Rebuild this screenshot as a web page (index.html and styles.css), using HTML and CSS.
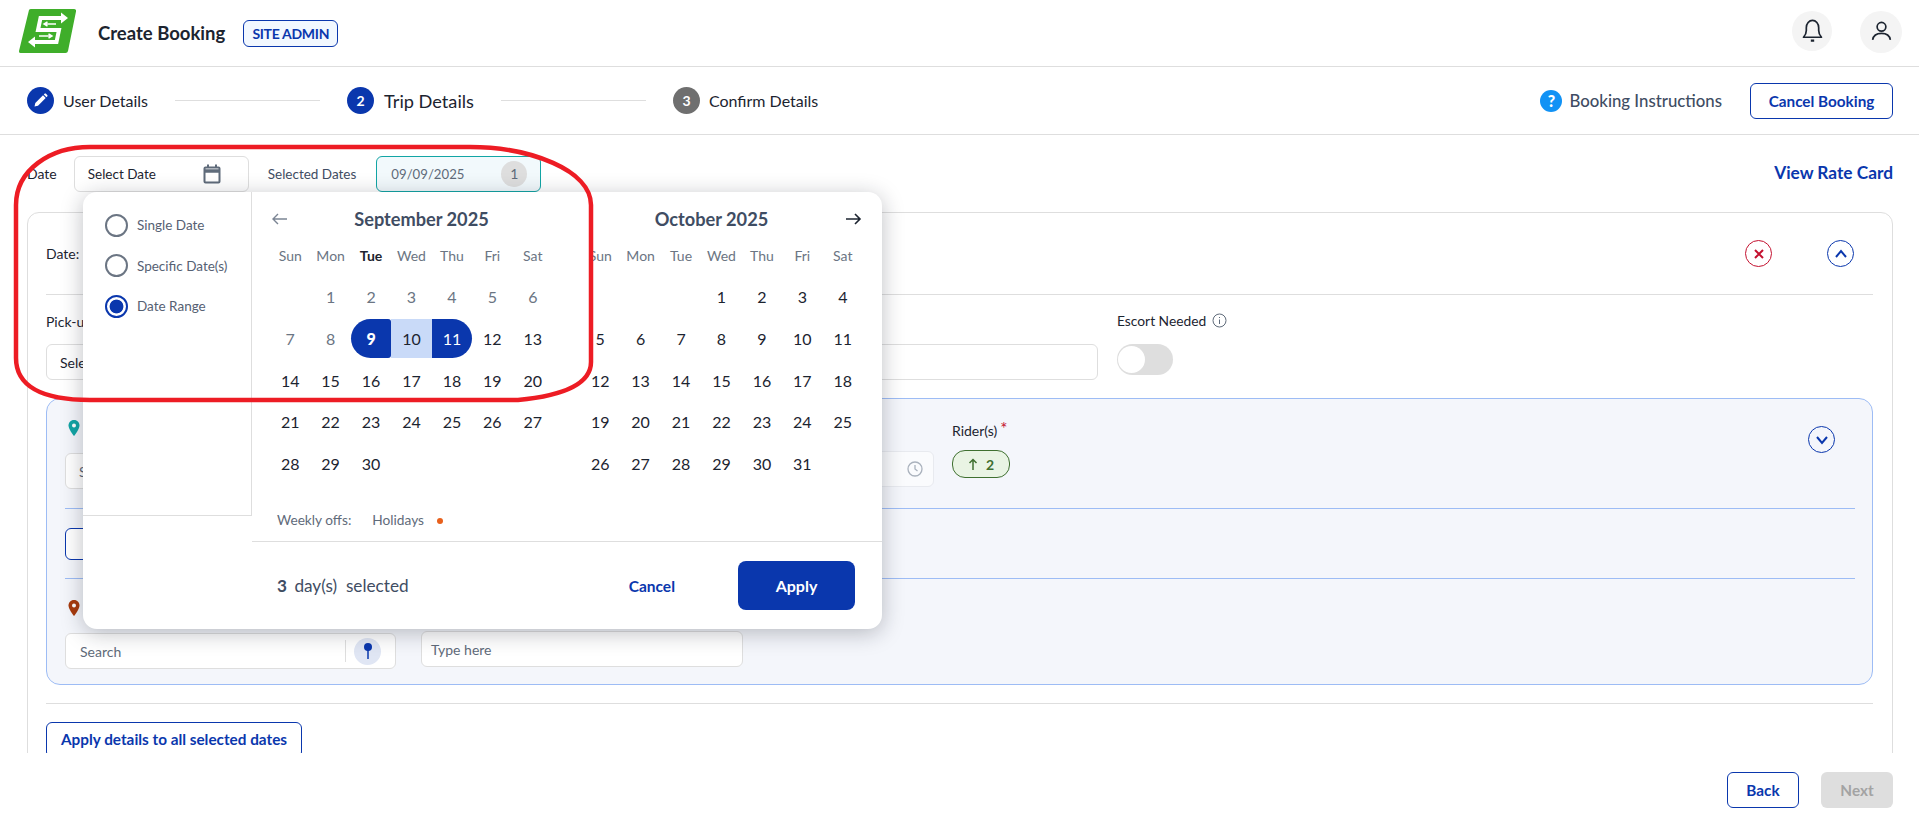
FILE: index.html
```html
<!DOCTYPE html>
<html lang="en">
<head>
<meta charset="utf-8">
<title>Create Booking</title>
<link rel="stylesheet" href="styles.css">
</head>
<body>
<header class="topbar">
  <svg class="logo" width="60" height="46" viewBox="0 0 60 46">
    <path d="M11 2 Q11.500 1 13 1 L56 1 Q58.500 1 58 3.500 L50 43 Q49.600 45 47.500 45 L2.500 45 Q0.500 45 1 43 Z" fill="#3fae2a"/>
    <path d="M44 10 H22.500 L20 22 H41 L38.500 34 H15" fill="none" stroke="#fff" stroke-width="4"/>
    <path d="M43 4.500 L50 10 L43 15.500 Z M17 28.500 L10 34 L17 39.500 Z" fill="#fff"/>
    <path d="M27 16 H38 M29.500 13.800 L26 16 L29.500 18.200 M21 28 H33 M30.500 25.800 L34 28 L30.500 30.200" fill="none" stroke="#fff" stroke-width="1.500"/>
  </svg>
  <h1 class="page-title">Create Booking</h1>
  <span class="role-badge">SITE ADMIN</span>
  <div class="top-actions">
    <span class="round-btn bell">
      <svg width="27" height="27" viewBox="0 0 24 24" fill="none" stroke="#1c2430" stroke-width="1.500"><path d="M4 18 Q6.500 15.500 6.500 12 V9.500 A5.500 6.500 0 0 1 17.500 9.500 V12 Q17.500 15.500 20 18 Z" stroke-linejoin="round"/><path d="M10.500 21 H13.500" stroke-width="2"/></svg>
    </span>
    <span class="round-btn user">
      <svg width="25" height="25" viewBox="0 0 24 24" fill="none" stroke="#1c2430" stroke-width="1.600"><circle cx="12" cy="7.500" r="4.200"/><path d="M3.500 20 Q4.500 13.800 12 13.800 Q19.500 13.800 20.500 20"/></svg>
    </span>
  </div>
</header>

<nav class="stepper">
  <div class="step">
    <span class="step-dot done">
      <svg width="17" height="17" viewBox="0 0 17 17"><path d="M2.500 14.500 L3.300 11 L11 3.300 L13.700 6 L6 13.700 Z M11.800 2.500 L12.800 1.600 Q13.300 1.200 13.800 1.600 L15.400 3.200 Q15.800 3.700 15.400 4.200 L14.500 5.200 Z" fill="#fff"/></svg>
    </span>
    <span class="step-label">User Details</span>
  </div>
  <span class="step-line line-one"></span>
  <div class="step">
    <span class="step-dot active">2</span>
    <span class="step-label current">Trip Details</span>
  </div>
  <span class="step-line line-two"></span>
  <div class="step">
    <span class="step-dot todo">3</span>
    <span class="step-label">Confirm Details</span>
  </div>
  <div class="step-actions">
    <span class="help-dot">?</span>
    <span class="help-text">Booking Instructions</span>
    <button class="btn btn-outline cancel-booking">Cancel Booking</button>
  </div>
</nav>

<main class="content">
  <div class="toolbar">
    <span class="tool-label date-label">Date</span>
    <div class="date-select">
      <span>Select Date</span>
      <svg width="18" height="20" viewBox="0 0 18 20" fill="none" stroke="#5f6b7a" stroke-width="2"><rect x="1.500" y="3.500" width="15" height="15" rx="1"/><path d="M1.500 7 H16.500" stroke-width="3.500"/><path d="M5 0.500 V3 M13 0.500 V3"/></svg>
    </div>
    <span class="tool-label selected-label">Selected Dates</span>
    <div class="date-selected">
      <span>09/09/2025</span>
      <span class="count">1</span>
    </div>
    <a class="rate-link">View Rate Card</a>
  </div>

  <section class="card">
    <div class="card-head">
      <span class="field-label">Date:</span>
      <div class="card-tools">
        <span class="circle red"><svg width="12" height="12" viewBox="0 0 12 12" fill="none" stroke="#c4112f" stroke-width="2"><path d="M2 2 L10 10 M10 2 L2 10"/></svg></span>
        <span class="circle blue"><svg width="14" height="14" viewBox="0 0 14 14" fill="none" stroke="#0a37ad" stroke-width="2"><path d="M2 10 L7 4 L12 10"/></svg></span>
      </div>
    </div>
    <div class="trip-row">
      <div class="field field-pickup">
        <span class="field-label">Pick-up</span>
        <div class="input">Select</div>
      </div>
      <div class="field field-wide">
        <span class="field-label">&nbsp;</span>
        <div class="input"></div>
      </div>
      <div class="field field-escort">
        <span class="field-label escort-label">Escort Needed
          <svg width="15" height="15" viewBox="0 0 15 15" fill="none" stroke="#5f6b7a"><circle cx="7.500" cy="7.500" r="6.500"/><path d="M7.500 6.500 V11 M7.500 4 V5"/></svg>
        </span>
        <span class="toggle"><span class="knob"></span></span>
      </div>
    </div>

    <div class="panel">
      <div class="panel-row pickup-row">
        <div class="stop-col">
          <span class="pin-line">
            <svg width="12" height="16" viewBox="0 0 12 16"><path d="M6 0 C2.500 0 0.500 2.500 0.500 5.500 C0.500 9.500 6 16 6 16 C6 16 11.500 9.500 11.500 5.500 C11.500 2.500 9.500 0 6 0 Z" fill="#12a5a5"/><circle cx="6" cy="5.500" r="2" fill="#fff"/></svg>
          </span>
          <div class="input small">Search</div>
        </div>
        <div class="time-col">
          <div class="input time-input">
            <svg width="16" height="16" viewBox="0 0 16 16" fill="none" stroke="#aab2bd" stroke-width="1.300"><circle cx="8" cy="8" r="7"/><path d="M8 4 V8 L10.500 10"/></svg>
          </div>
        </div>
        <div class="rider-col">
          <span class="field-label rider-label">Rider(s)<span class="star">*</span></span>
          <span class="rider-chip">
            <svg width="10" height="12" viewBox="0 0 10 12" fill="none" stroke="#3f7030" stroke-width="1.500"><path d="M5 12 V1.500 M1.500 5 L5 1.500 L8.500 5"/></svg>
            2
          </span>
        </div>
        <span class="circle blue expand"><svg width="14" height="14" viewBox="0 0 14 14" fill="none" stroke="#0a37ad" stroke-width="2"><path d="M2 4 L7 10 L12 4"/></svg></span>
      </div>
      <div class="panel-row stop-row">
        <button class="btn btn-outline add-stop">Add</button>
      </div>
      <div class="panel-row drop-row">
        <div class="stop-col">
          <span class="pin-line">
            <svg width="12" height="16" viewBox="0 0 12 16"><path d="M6 0 C2.500 0 0.500 2.500 0.500 5.500 C0.500 9.500 6 16 6 16 C6 16 11.500 9.500 11.500 5.500 C11.500 2.500 9.500 0 6 0 Z" fill="#a83a0c"/><circle cx="6" cy="5.500" r="2" fill="#fff"/></svg>
          </span>
          <div class="input small search-input">
            <span>Search</span>
            <span class="search-divider"></span>
            <span class="pin-btn"><svg width="10" height="18" viewBox="0 0 10 18"><circle cx="5" cy="5" r="4" fill="#0a37ad"/><path d="M5 8 V17" stroke="#0a37ad" stroke-width="1.500"/></svg></span>
          </div>
        </div>
        <div class="input small type-input">Type here</div>
      </div>
    </div>

    <div class="apply-row">
      <button class="btn btn-outline apply-all">Apply details to all selected dates</button>
    </div>
  </section>
</main>

<footer class="page-foot">
  <button class="btn btn-outline foot-btn">Back</button>
  <button class="btn btn-disabled foot-btn">Next</button>
</footer>

<div class="picker">
  <aside class="picker-modes">
    <label class="mode"><span class="radio"></span>Single Date</label>
    <label class="mode"><span class="radio"></span>Specific Date(s)</label>
    <label class="mode"><span class="radio on"></span>Date Range</label>
  </aside>
  <div class="picker-main">
    <div class="months">
      <div class="month">
        <div class="month-head">
          <svg class="nav-arrow" width="20" height="20" viewBox="0 0 20 20" fill="none" stroke="#7b8594" stroke-width="1.400"><path d="M17 10 H3 M8 5 L3 10 L8 15"/></svg>
          <h2 class="month-title">September 2025</h2>
        </div>
        <div class="weekdays">
          <span>Sun</span><span>Mon</span><span class="today-col">Tue</span><span>Wed</span><span>Thu</span><span>Fri</span><span>Sat</span>
        </div>
        <div class="days">
          <span></span><span class="past">1</span><span class="past">2</span><span class="past">3</span><span class="past">4</span><span class="past">5</span><span class="past">6</span>
          <span class="past">7</span><span class="past">8</span><span class="range-wrap"><b class="range start">9</b></span><span class="range-wrap"><b class="range mid">10</b></span><span class="range-wrap"><b class="range end">11</b></span><span>12</span><span>13</span>
          <span>14</span><span>15</span><span>16</span><span>17</span><span>18</span><span>19</span><span>20</span>
          <span>21</span><span>22</span><span>23</span><span>24</span><span>25</span><span>26</span><span>27</span>
          <span>28</span><span>29</span><span>30</span>
        </div>
      </div>
      <div class="month">
        <div class="month-head">
          <h2 class="month-title">October 2025</h2>
          <svg class="nav-arrow" width="20" height="20" viewBox="0 0 20 20" fill="none" stroke="#1c2430" stroke-width="1.600"><path d="M3 10 H17 M12 5 L17 10 L12 15"/></svg>
        </div>
        <div class="weekdays">
          <span>Sun</span><span>Mon</span><span>Tue</span><span>Wed</span><span>Thu</span><span>Fri</span><span>Sat</span>
        </div>
        <div class="days">
          <span></span><span></span><span></span><span>1</span><span>2</span><span>3</span><span>4</span>
          <span>5</span><span>6</span><span>7</span><span>8</span><span>9</span><span>10</span><span>11</span>
          <span>12</span><span>13</span><span>14</span><span>15</span><span>16</span><span>17</span><span>18</span>
          <span>19</span><span>20</span><span>21</span><span>22</span><span>23</span><span>24</span><span>25</span>
          <span>26</span><span>27</span><span>28</span><span>29</span><span>30</span><span>31</span>
        </div>
      </div>
    </div>
    <div class="legend">
      <span>Weekly offs:</span>
      <span class="legend-holiday">Holidays</span>
      <span class="legend-dot"></span>
    </div>
    <div class="picker-foot">
      <span class="selected-count"><b>3</b> day(s)&nbsp; selected</span>
      <a class="picker-cancel">Cancel</a>
      <button class="btn btn-primary picker-apply">Apply</button>
    </div>
  </div>
</div>

<svg class="annotation" width="1919" height="824" viewBox="0 0 1919 824" fill="none">
  <path d="M90 400 L518 400 C560 396 591 385 591 362 L591 205 C591 170 530 147 470 147 L90 147 C50 147 16 170 16 205 L16 358 C16 385 40 400 90 400 Z" stroke="#ed1c24" stroke-width="4.500"/>
</svg>
</body>
</html>
```
FILE: styles.css
```css
* { box-sizing: border-box; }
html, body { margin: 0; height: 824px; overflow: hidden; }
body {
  position: relative;
  font-family: Lato, "Noto Sans", sans-serif;
  color: #1c2430;
  background: #fff;
  font-size: 14px;
}
button { font-family: inherit; cursor: pointer; }
h1, h2 { margin: 0; }

/* top bar */
.topbar {
  height: 67px;
  display: flex;
  align-items: center;
  padding: 0 17px 0 18px;
  border-bottom: 1px solid #dedede;
}
.logo { flex: none; margin-top: -5px; }
.page-title { font-size: 18.500px; font-weight: 700; margin-left: 20px; color: #1c2430; }
.role-badge {
  margin-left: 18px;
  height: 27px;
  width: 95px;
  display: flex;
  align-items: center;
  justify-content: center;
  font-size: 14px;
  font-weight: 700;
  letter-spacing: -.3px;
  color: #0a37ad;
  background: #f2f8ff;
  border: 1px solid #0a37ad;
  border-radius: 6px;
}
.top-actions { margin-left: auto; display: flex; align-items: center; gap: 28px; }
.round-btn {
  display: flex;
  align-items: center;
  justify-content: center;
  border-radius: 50%;
  background: #f4f4f4;
}
.bell { width: 40px; height: 40px; margin-top: -5px; }
.user { width: 42px; height: 42px; margin-top: -3px; }

/* stepper */
.stepper {
  height: 68px;
  display: flex;
  align-items: center;
  padding: 0 26px 0 27px;
  border-bottom: 1px solid #dedede;
}
.step { display: flex; align-items: center; }
.step-dot {
  width: 27px;
  height: 27px;
  border-radius: 50%;
  display: flex;
  align-items: center;
  justify-content: center;
  color: #fff;
  font-size: 14px;
  font-weight: 700;
  flex: none;
}
.step-dot.done, .step-dot.active { background: #0a37ad; }
.step-dot.todo { background: #6f6f6f; }
.step-label { font-size: 16px; margin-left: 9px; color: #1c2430; }
.step-label.current { font-size: 18.200px; margin-left: 10px; }
.step-line { height: 1px; background: #dedede; width: 145px; }
.line-one { margin: 0 27px; }
.line-two { margin: 0 27px; }
.step-actions { margin-left: auto; display: flex; align-items: center; }
.help-dot {
  width: 22px;
  height: 22px;
  border-radius: 50%;
  background: #1192f5;
  color: #fff;
  font-weight: 900;
  font-size: 16px;
  display: flex;
  align-items: center;
  justify-content: center;
}
.help-text { font-size: 16.800px; font-weight: 500; color: #3f4d63; margin-left: 7px; margin-right: 28px; }
.btn { border-radius: 6px; font-weight: 700; font-size: 15.300px; }
.btn-outline { background: #fff; color: #0a37ad; border: 1px solid #0a37ad; }
.btn-primary { background: #0a37ad; color: #fff; border: 0; }
.btn-disabled { background: #dedede; color: #a3a3a3; border: 0; }
.cancel-booking { width: 143px; height: 36px; padding: 0; }

/* content */
.content {
  height: 618px;
  overflow: hidden;
  padding: 21px 26px 0 27px;
}
.toolbar { display: flex; align-items: center; height: 35px; }
.tool-label { font-size: 14px; color: #1c2430; }
.date-select {
  margin-left: 17px;
  width: 175px;
  height: 36px;
  display: flex;
  align-items: center;
  justify-content: space-between;
  padding: 0 27px 0 13px;
  border: 1px solid #dedede;
  border-radius: 6px;
  font-size: 13.500px;
}
.selected-label { margin-left: 19px; color: #3f4d63; font-size: 13.500px; }
.date-selected {
  margin-left: 20px;
  width: 165px;
  height: 36px;
  display: flex;
  align-items: center;
  justify-content: space-between;
  padding: 0 13px 0 14px;
  background: #f2f9fc;
  border: 1px solid #12a5a5;
  border-radius: 6px;
  color: #5f6b7a;
  font-size: 13.200px;
}
.count {
  width: 26px;
  height: 26px;
  border-radius: 50%;
  background: #dedede;
  display: flex;
  align-items: center;
  justify-content: center;
  font-size: 14px;
  color: #5f6b7a;
}
.rate-link { margin-left: auto; margin-top: -2px; font-weight: 700; font-size: 17.300px; color: #0a37ad; }

/* card */
.card {
  margin-top: 21px;
  border: 1px solid #dedede;
  border-radius: 12px 12px 0 0;
  padding: 0 19px 0 18px;
}
.card-head {
  height: 82px;
  display: flex;
  align-items: center;
  justify-content: space-between;
  border-bottom: 1px solid #dedede;
}
.field-label { font-size: 14px; color: #1c2430; }
.card-tools { display: flex; gap: 55px; margin-right: 19px; }
.circle {
  width: 27px;
  height: 27px;
  border-radius: 50%;
  display: flex;
  align-items: center;
  justify-content: center;
  flex: none;
}
.circle.red { border: 1.500px solid #c4112f; }
.circle.blue { border: 1.500px solid #0a37ad; }
.trip-row { height: 103px; display: flex; padding-top: 18px; }
.field { display: flex; flex-direction: column; gap: 14px; }
.field-pickup { width: 330px; }
.field-wide { margin-left: 21px; width: 701px; }
.field-escort { margin-left: 19px; }
.escort-label { display: flex; align-items: center; gap: 6px; height: 17px; font-size: 13.800px; margin-top: -1px; margin-bottom: 1px; }
.input {
  height: 36px;
  background: #fff;
  border: 1px solid #dedede;
  border-radius: 6px;
  display: flex;
  align-items: center;
  padding: 0 13px;
  font-size: 14px;
}
.toggle {
  width: 56px;
  height: 31px;
  border-radius: 16px;
  background: #dedede;
  display: block;
  position: relative;
}
.knob {
  position: absolute;
  left: 1px;
  top: 2px;
  width: 27px;
  height: 27px;
  border-radius: 50%;
  background: #fff;
}

/* blue panel */
.panel {
  height: 287px;
  background: #f4f6fb;
  border: 1px solid #9dbcf5;
  border-radius: 14px;
  padding: 0 17px 0 18px;
}
.panel-row { display: flex; position: relative; }
.pickup-row { height: 110px; border-bottom: 1px solid #9dbcf5; align-items: flex-start; }
.stop-row { height: 70px; border-bottom: 1px solid #9dbcf5; align-items: center; }
.drop-row { height: 106px; }
.stop-col { width: 331px; flex: none; padding-top: 21px; }
.pin-line { display: block; height: 33px; padding-left: 3px; }
.input.small { color: #5f6b7a; font-size: 14px; background: #fff; }
.time-col { width: 538px; padding-top: 52px; flex: none; display: flex; justify-content: flex-end; }
.time-input { width: 200px; justify-content: flex-end; padding-right: 10px; background: #fafbfd; border-color: #e8eaef; }
.rider-col { margin-left: 18px; padding-top: 23px; display: flex; flex-direction: column; gap: 11px; align-items: flex-start; }
.rider-label { display: flex; align-items: flex-start; }
.star { color: #c4112f; font-size: 17px; line-height: 14px; margin-left: 3px; }
.rider-chip {
  width: 58px;
  height: 28px;
  border-radius: 13px;
  border: 1px solid #3f7030;
  background: #e9f4e4;
  color: #3f7030;
  font-size: 14px;
  font-weight: 700;
  display: flex;
  align-items: center;
  justify-content: center;
  gap: 8px;
}
.expand { position: absolute; right: 20px; top: 27px; }
.add-stop { width: 120px; height: 32px; }
.search-input { justify-content: flex-start; padding: 0 8px 0 14px; }
.search-input > span:first-child { width: 265px; }
.search-divider { width: 1px; height: 22px; background: #dedede; }
.pin-btn {
  width: 27px;
  height: 27px;
  margin-left: 8px;
  border-radius: 50%;
  background: #e0e6f4;
  display: flex;
  align-items: center;
  justify-content: center;
}
.type-input { width: 322px; margin-top: 52px; margin-left: 25px; padding-left: 9px; color: #6f7782; }
.apply-row { margin-top: 18px; padding-top: 18px; border-top: 1px solid #dedede; }
.apply-all { width: 256px; height: 36px; padding: 0 0 3px; }

/* bottom bar */
.page-foot {
  height: 71px;
  display: flex;
  justify-content: flex-end;
  align-items: flex-start;
  gap: 22px;
  padding: 19px 26px 0 0;
}
.foot-btn { width: 72px; height: 36px; padding: 0; }

/* date picker popover */
.picker {
  position: absolute;
  left: 83px;
  top: 192px;
  width: 799px;
  height: 437px;
  display: flex;
  background: #fff;
  border-radius: 14px;
  box-shadow: 0 4px 22px rgba(20, 25, 40, .28);
}
.picker-modes {
  width: 169px;
  height: 324px;
  flex: none;
  padding: 22px 0 0 22px;
  border-right: 1px solid #dedede;
  border-bottom: 1px solid #dedede;
  display: flex;
  flex-direction: column;
  gap: 18.500px;
}
.mode { display: flex; align-items: center; gap: 9px; height: 22px; font-size: 13.500px; color: #566173; }
.radio { width: 23px; height: 23px; border-radius: 50%; border: 2px solid #6b7583; flex: none; }
.radio.on {
  border-color: #0a37ad;
  background: radial-gradient(circle, #0a37ad 0 6.500px, #fff 7.300px);
}
.picker-main { flex: 1; min-width: 0; display: flex; flex-direction: column; }
.months { display: flex; gap: 27px; padding: 0 19px 0 18px; height: 294px; }
.month { width: 283px; flex: none; }
.month-head { display: flex; align-items: center; height: 54px; }
.nav-arrow { flex: none; }
.month-title { flex: 1; text-align: center; font-size: 18.200px; font-weight: 700; color: #3f4d63; }
.weekdays { display: grid; grid-template-columns: repeat(7, 1fr); height: 30px; }
.weekdays span { text-align: center; font-size: 14px; line-height: 20px; color: #6b7583; }
.weekdays .today-col { font-weight: 700; color: #1c2430; }
.days { display: grid; grid-template-columns: repeat(7, 1fr); grid-auto-rows: 41.700px; }
.days span { display: flex; align-items: center; justify-content: center; font-size: 16px; color: #1c2430; }
.days .past { color: #6b7583; }
.days .range-wrap { align-items: stretch; justify-content: stretch; padding: 1px 0; }
.range {
  flex: 1;
  display: flex;
  align-items: center;
  justify-content: center;
  font-weight: 400;
}
.range.start { background: #0a37ad; color: #fff; font-weight: 900; border-radius: 20px 3px 3px 20px; }
.range.mid { background: #c9daf8; color: #1c2430; }
.range.end { background: #0a37ad; color: #fff; border-radius: 0 20px 20px 0; }
.legend {
  height: 56px;
  padding: 12px 0 0 25px;
  display: flex;
  align-items: center;
  font-size: 13.700px;
  color: #5f6b7a;
  border-bottom: 1px solid #dedede;
}
.legend-holiday { margin-left: 21px; }
.legend-dot { width: 6px; height: 6px; margin-left: 13px; margin-top: 3px; border-radius: 50%; background: #e8601c; }
.picker-foot { flex: 1; display: flex; align-items: center; padding: 0 27px 0 25px; }
.selected-count { font-size: 17.200px; color: #3f4d63; }
.selected-count b { font-weight: 700; margin-right: 3px; }
.picker-cancel { margin-left: auto; font-size: 15.500px; font-weight: 700; color: #0a37ad; margin-right: 63px; }
.picker-apply { width: 117px; height: 49px; border-radius: 8px; font-size: 16px; }

.annotation { position: absolute; left: 0; top: 0; pointer-events: none; }
```
